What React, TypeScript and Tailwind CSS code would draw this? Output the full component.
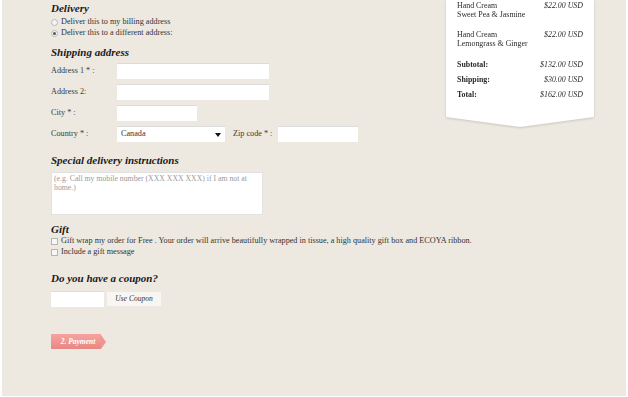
import React from 'react';

const SERIF = "font-['Liberation_Serif',serif]";

function Radio({ checked }: { checked?: boolean }) {
  return (
    <span className="flex h-[7px] w-[7px] shrink-0 items-center justify-center rounded-full border border-[#b9b9b9] bg-[#f4f4f4]">
      {checked && <span className="h-[3px] w-[3px] rounded-full bg-[#555]" />}
    </span>
  );
}

function Check() {
  return <span className="h-[7px] w-[7px] shrink-0 border border-[#b5b5b5] bg-[#f7f7f7]" />;
}

function Field({ label, width }: { label: string; width: string }) {
  return (
    <div className="flex h-[16px] items-center">
      <span className="w-[66px] text-[8.2px] text-[#3a3a3a]">{label}</span>
      <span className={`h-[16px] ${width} border-t border-[#dcdcdc] bg-white`} />
    </div>
  );
}

const ITEMS = [
  { name: 'Hand Cream', variant: 'Sweet Pea & Jasmine', price: '$22.00 USD' },
  { name: 'Hand Cream', variant: 'Lemongrass & Ginger', price: '$22.00 USD' },
];

const TOTALS = [
  { label: 'Subtotal:', value: '$132.00 USD' },
  { label: 'Shipping:', value: '$30.00 USD' },
  { label: 'Total:', value: '$162.00 USD' },
];

export default function App() {
  return (
    <div className="h-[397px] w-[628px] bg-white pl-[2px] pr-[2px] pb-[1px]">
      <div className={`flex h-full w-full bg-[#ede8e0] ${SERIF}`}>
        <section className="flex w-[400px] shrink-0 flex-col pl-[49px] text-[#333]">
          <h2 className="mt-[2px] text-[11px] font-bold italic leading-[13px] text-[#1a1a1a]">Delivery</h2>
          <div className="mt-[2px] flex h-[11px] items-center gap-[3px] text-[8.2px]">
            <Radio />
            Deliver this to my billing address
          </div>
          <div className="flex h-[11px] items-center gap-[3px] text-[8.2px]">
            <Radio checked />
            Deliver this to a different address:
          </div>

          <h2 className="mt-[7px] text-[11px] font-bold italic leading-[13px] text-[#1a1a1a]">Shipping address</h2>
          <div className="mt-[4px] flex flex-col gap-[5px]">
            <Field label="Address 1 * :" width="w-[152px]" />
            <Field label="Address 2:" width="w-[152px]" />
            <Field label="City * :" width="w-[80px]" />
            <div className="flex h-[16px] items-center">
              <span className="w-[66px] text-[8.2px] text-[#3a3a3a]">Country * :</span>
              <span className="flex h-[16px] w-[108px] items-center justify-between border-t border-[#dcdcdc] bg-white pl-[4px] pr-[4px] text-[8.2px] text-[#333]">
                Canada
                <span className="h-0 w-0 border-x-[3px] border-t-[4px] border-x-transparent border-t-[#111]" />
              </span>
              <span className="ml-[8px] w-[45px] text-[8.2px] text-[#3a3a3a]">Zip code * :</span>
              <span className="h-[16px] w-[80px] border-t border-[#dcdcdc] bg-white" />
            </div>
          </div>

          <h2 className="mt-[12px] text-[11px] font-bold italic leading-[13px] text-[#1a1a1a]">Special delivery instructions</h2>
          <div className="mt-[5px] h-[43px] w-[212px] border border-[#e2e2e2] bg-white px-[2px] py-[1px] text-[7.75px] leading-[9px] text-[#9a9a9a]">
            (e.g. Call my mobile number (XXX XXX XXX) if I am not at home.)
          </div>

          <h2 className="mt-[8px] text-[11px] font-bold italic leading-[13px] text-[#1a1a1a]">Gift</h2>
          <div className="flex h-[11px] items-center gap-[3px] whitespace-nowrap text-[8.2px]">
            <Check />
            Gift wrap my order for Free . Your order will arrive beautifully wrapped in tissue, a high quality gift box and ECOYA ribbon.
          </div>
          <div className="flex h-[11px] items-center gap-[3px] text-[8.2px]">
            <Check />
            Include a gift message
          </div>

          <h2 className="mt-[14px] text-[11px] font-bold italic leading-[13px] text-[#1a1a1a]">Do you have a coupon?</h2>
          <div className="mt-[6px] flex items-center gap-[3px]">
            <span className="h-[16px] w-[53px] border-t border-[#dcdcdc] bg-white" />
            <button className="h-[14px] w-[54px] bg-[#f7f6f3] text-[7.5px] italic text-[#333]">Use Coupon</button>
          </div>

          <div className="mt-[27px] flex items-center">
            <span className="flex h-[15px] w-[50px] items-center justify-center bg-gradient-to-b from-[#f6a3a0] to-[#e88784] pl-[4px] text-[7.5px] font-bold italic text-white">
              2. Payment
            </span>
            <span className="h-0 w-0 border-y-[7.5px] border-l-[5px] border-y-transparent border-l-[#ef9592]" />
          </div>
        </section>

        <aside className="ml-auto mr-[32px] h-[127px] w-[148px] drop-shadow-[0_1px_1px_rgba(0,0,0,0.15)]">
          <div className="h-[117px] bg-white px-[11px] pt-[1px] text-[7.9px] text-[#2a2a2a]">
            {ITEMS.map((it, i) => (
              <div key={i} className={`flex justify-between leading-[9px] ${i ? 'mt-[11px]' : ''}`}>
                <div>
                  <div>{it.name}</div>
                  <div>{it.variant}</div>
                </div>
                <span className="italic">{it.price}</span>
              </div>
            ))}
            <div className="mt-[12px] flex flex-col gap-[6px]">
              {TOTALS.map((t) => (
                <div key={t.label} className="flex justify-between leading-[9px]">
                  <span className="font-bold">{t.label}</span>
                  <span className="italic">{t.value}</span>
                </div>
              ))}
            </div>
          </div>
          <div className="h-0 w-0 border-l-[74px] border-r-[74px] border-t-[10px] border-x-transparent border-t-white" />
        </aside>
      </div>
    </div>
  );
}
